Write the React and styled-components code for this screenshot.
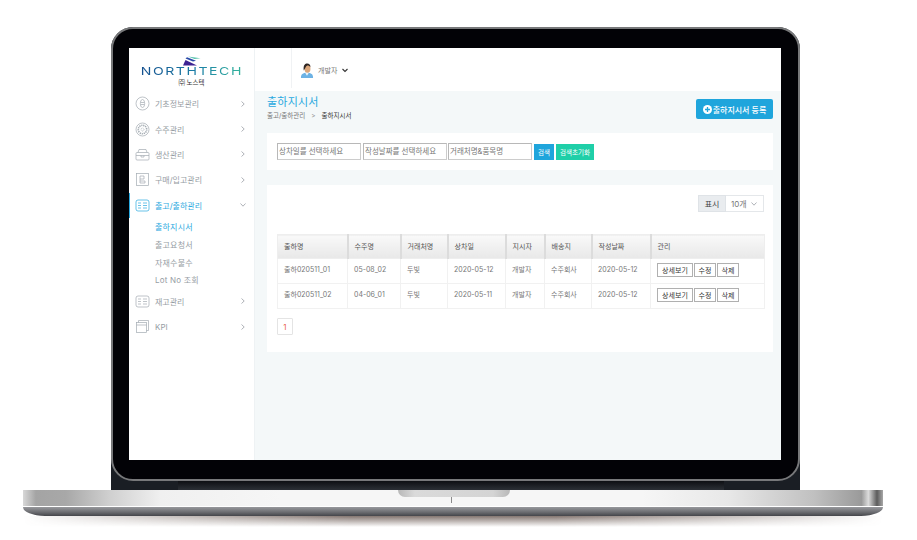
import styled, { createGlobalStyle } from "styled-components"

const GlobalStyle = createGlobalStyle`
    html, body {
        margin: 0;
        padding: 0;
        background: #fff;
        overflow: hidden;
    }
    * {
        box-sizing: border-box;
    }
    body {
        font-family: Inter, "Noto Sans CJK KR", "Noto Sans", sans-serif;
    }
`

const menuTop = [
    { name: "기초정보관리", icon: "coin" },
    { name: "수주관리", icon: "dots" },
    { name: "생산관리", icon: "case" },
    { name: "구매/입고관리", icon: "receipt" },
]
const subMenu = ["출하지시서", "출고요청서", "자재수불수", "Lot No 조회"]
const menuBottom = [
    { name: "재고관리", icon: "list" },
    { name: "KPI", icon: "window" },
]
const columns = [70, 53, 47, 58, 39, 47, 59, 114]
const headers = ["출하명", "수주명", "거래처명", "상차일", "지시자", "배송지", "작성날짜", "관리"]
const rows = [
    ["출하020511_01", "05-08_02", "두빛", "2020-05-12", "개발자", "수주회사", "2020-05-12"],
    ["출하020511_02", "04-06_01", "두빛", "2020-05-11", "개발자", "수주회사", "2020-05-12"],
]

function MenuIcon({ type, color }) {
    return (
        <svg width="15" height="15" viewBox="0 0 15 15" fill="none" stroke={color} strokeWidth="0.7">
            {type === "coin" && <>
                <circle cx="7.500" cy="7.500" r="6.500" />
                <ellipse cx="7.500" cy="7.500" rx="2.200" ry="4" />
                <path d="M6 6.500h3M6 8.500h3" />
            </>}
            {type === "dots" && <>
                <circle cx="7.500" cy="7.500" r="6.500" />
                <circle cx="7.500" cy="7.500" r="4.200" strokeDasharray="1.200 0.800" strokeWidth="1.600" />
                <circle cx="7.500" cy="7.500" r="1.500" strokeDasharray="1 0.600" />
            </>}
            {type === "case" && <>
                <rect x="1" y="5.500" width="13" height="7.500" rx="1" />
                <path d="M1 8.500h13M3 5.500L4 2.500h7l1 3M6 8.500v1.500h3V8.500" />
            </>}
            {type === "receipt" && <>
                <rect x="1.500" y="1.500" width="12" height="12" />
                <path d="M5 11V4h4v3H5M5 9h5v2H5" />
            </>}
            {type === "list" && <>
                <rect x="1" y="2" width="13" height="11" rx="2" />
                <path d="M3 5h3M3 7.500h3M3 10h3M8 5h4M8 7.500h4M8 10h4" />
            </>}
            {type === "window" && <>
                <rect x="1.500" y="3.500" width="10" height="10" />
                <path d="M1.500 6h10M3.500 3.500V1.500h10v10h-2" />
            </>}
        </svg>
    )
}

function Chevron({ down }) {
    return (
        <svg width="6" height="6" viewBox="0 0 6 6" fill="none" stroke="#9aa0a6" strokeWidth="0.8">
            <path d={down ? "M0.500 1.500L3 4.200 5.500 1.500" : "M1.500 0.500L4.200 3 1.500 5.500"} />
        </svg>
    )
}

function Menu({ item }) {
    return (
        <MenuItem>
            <MenuIcon type={item.icon} color="#a3abb2" />
            <MenuName>{item.name}</MenuName>
            <Chevron />
        </MenuItem>
    )
}

export default function App() {
    return (
        <Page>
            <GlobalStyle />
            <LidBack>
                <Bezel>
                    <Screen>
                        <Sidebar>
                            <Logo>
                                <svg width="18" height="10" viewBox="0 0 18 10">
                                    <path d="M0 9.500L2.500 4l11.500 5.500z" fill="#3d2392" />
                                    <path d="M2.500 2.500l1.500 -1.200 9 3.500 -3 .7z" fill="#2a4aa8" />
                                    <path d="M5 .5l12.500 1.800 -6 .8z" fill="#58c3ae" />
                                </svg>
                                <LogoWord>NORTHTECH</LogoWord>
                                <LogoSub>㈜ 노스텍</LogoSub>
                            </Logo>
                            {menuTop.map(item => <Menu key={item.name} item={item} />)}
                            <MenuItem $active>
                                <MenuIcon type="list" color="#2aa9e0" />
                                <MenuName>출고/출하관리</MenuName>
                                <Chevron down />
                            </MenuItem>
                            {subMenu.map((name, i) => <SubItem key={name} $active={i === 0}>{name}</SubItem>)}
                            {menuBottom.map(item => <Menu key={item.name} item={item} />)}
                        </Sidebar>
                        <Right>
                            <Header>
                                <HeaderUser>
                                    <svg width="14" height="15" viewBox="0 0 15 16">
                                        <path d="M1 16c0-4 2-5.500 6.500-5.500S14 12 14 16z" fill="#6db2e4" />
                                        <path d="M5.500 10.500l2 3 2-3z" fill="#eef4f8" />
                                        <ellipse cx="8" cy="6" rx="3.200" ry="4.300" fill="#dba67a" />
                                        <path d="M4 8C3.300 2 5.500 .5 7.800 .5c2 0 3.600 1.300 3.300 4-.7-1.300-1.500-1.800-3.300-1.800C6 3 5.800 6 4 8z" fill="#2e2522" />
                                    </svg>
                                    <UserName>개발자</UserName>
                                    <svg width="6" height="5" viewBox="0 0 6 5" fill="none" stroke="#333" strokeWidth="1.100">
                                        <path d="M0.500 1L3 3.500 5.500 1" />
                                    </svg>
                                </HeaderUser>
                            </Header>
                            <Main>
                                <TitleRow>
                                    <div>
                                        <Title>출하지시서</Title>
                                        <Breadcrumb>
                                            출고/출하관리<Sep>&gt;</Sep><b>출하지시서</b>
                                        </Breadcrumb>
                                    </div>
                                    <AddButton>
                                        <svg width="9" height="9" viewBox="0 0 9 9">
                                            <circle cx="4.500" cy="4.500" r="4.500" fill="#fff" />
                                            <path d="M4.500 2v5M2 4.500h5" stroke="#1fa5dc" strokeWidth="1.300" />
                                        </svg>
                                        출하지시서 등록
                                    </AddButton>
                                </TitleRow>
                                <SearchCard>
                                    <SearchInput placeholder="상차일를 선택하세요" />
                                    <SearchInput placeholder="작성날짜를 선택하세요" />
                                    <SearchInput placeholder="거래처명&품목명" />
                                    <SearchButton>검색</SearchButton>
                                    <ResetButton>검색초기화</ResetButton>
                                </SearchCard>
                                <TableCard>
                                    <ShowRow>
                                        <ShowLabel>표시</ShowLabel>
                                        <ShowValue>10개<Chevron down /></ShowValue>
                                    </ShowRow>
                                    <Table>
                                        <colgroup>
                                            {columns.map((w, i) => <col key={i} width={w} />)}
                                        </colgroup>
                                        <thead>
                                            <tr>{headers.map(h => <Th key={h}>{h}</Th>)}</tr>
                                        </thead>
                                        <tbody>
                                            {rows.map(row => (
                                                <tr key={row[0]}>
                                                    {row.map((cell, i) => <Td key={i}><CellText>{cell}</CellText></Td>)}
                                                    <Td>
                                                        <Actions>
                                                            <ActionButton $w={36}>상세보기</ActionButton>
                                                            <ActionButton $w={22}>수정</ActionButton>
                                                            <ActionButton $w={22}>삭제</ActionButton>
                                                        </Actions>
                                                    </Td>
                                                </tr>
                                            ))}
                                        </tbody>
                                    </Table>
                                    <PageBox>1</PageBox>
                                </TableCard>
                            </Main>
                        </Right>
                    </Screen>
                </Bezel>
                <HingeBand />
            </LidBack>
            <Base>
                <BaseTop />
                <BaseLip />
                <Notch />
                <Tick />
            </Base>
            <BaseShadow />
        </Page>
    )
}

const Page = styled.div`
    width: 917px;
    height: 540px;
    padding-top: 27px;
    display: flex;
    flex-direction: column;
    align-items: center;
    background: #fff;
    overflow: hidden;
`
const LidBack = styled.div`
    width: 689px;
    margin-left: -6px;
    background: #1a1e24;
    border-radius: 22px 22px 0 0;
    display: flex;
    flex-direction: column;
`
const Bezel = styled.div`
    height: 454px;
    padding: 19px 17px 19px 16px;
    background: #020206;
    border: 2px solid #77787a;
    border-radius: 22px;
`
const HingeBand = styled.div`
    height: 9px;
    margin: 0 76px 0 67px;
    background: linear-gradient(#0d0f13, #2c3036);
`
const Screen = styled.div`
    width: 652px;
    height: 412px;
    display: flex;
    background: #fff;
    overflow: hidden;
`
const Sidebar = styled.div`
    width: 126px;
    flex-shrink: 0;
    background: #fff;
    border-right: 1px solid #eef2f4;
`
const Logo = styled.div`
    height: 43px;
    padding-top: 8px;
    display: flex;
    flex-direction: column;
    align-items: center;
    line-height: 1;
`
const LogoWord = styled.div`
    font-family: Inter, sans-serif;
    font-size: 11px;
    line-height: 10px;
    font-weight: 400;
    letter-spacing: 1.2px;
    margin-right: -1px;
    transform: scaleX(1.28);
    background: linear-gradient(to right, #14508f, #1b7fa6 55%, #35b59c);
    -webkit-background-clip: text;
    background-clip: text;
    color: transparent;
    white-space: nowrap;
`
const LogoSub = styled.div`
    font-family: "Noto Sans CJK KR", sans-serif;
    font-size: 6.500px;
    line-height: 7px;
    color: #333;
    margin-top: 3px;
`
const MenuItem = styled.div`
    height: 25.4px;
    display: flex;
    align-items: center;
    padding: 0 8px 0 6px;
    gap: 5px;
    font-size: 8px;
    color: ${props => props.$active ? "#2aa9e0" : "#969da4"};
    box-shadow: ${props => props.$active ? "inset 1px 0 0 #2aa9e0" : "none"};
`
const MenuName = styled.span`
    flex: 1;
`
const SubItem = styled.div`
    height: 17.7px;
    padding-left: 26px;
    display: flex;
    align-items: center;
    font-size: 8px;
    letter-spacing: 0.2px;
    color: ${props => props.$active ? "#2aa9e0" : "#969da4"};
`
const Right = styled.div`
    flex: 1;
    min-width: 0;
    display: flex;
    flex-direction: column;
`
const Header = styled.div`
    height: 43px;
    padding-left: 36px;
    background: #fff;
`
const HeaderUser = styled.div`
    height: 40px;
    padding: 4px 0 0 8px;
    display: flex;
    align-items: center;
    gap: 4px;
    font-size: 7px;
    color: #777;
    border-left: 1px solid #f0f2f4;
`
const UserName = styled.span`
    margin-right: 1px;
`
const Main = styled.div`
    flex: 1;
    padding: 4px 8px 0 12px;
    background: #f4f8f9;
`
const TitleRow = styled.div`
    height: 38px;
    display: flex;
    justify-content: space-between;
    align-items: flex-start;
`
const Title = styled.div`
    font-size: 11px;
    line-height: 14px;
    letter-spacing: 0.2px;
    color: #2aa9e0;
`
const Breadcrumb = styled.div`
    margin-top: 3px;
    font-size: 6.500px;
    line-height: 9px;
    color: #777;
    b {
        font-weight: 400;
        color: #333;
    }
`
const Sep = styled.span`
    margin: 0 6px;
    color: #999;
`
const AddButton = styled.button`
    width: 77px;
    height: 20px;
    margin-top: 4px;
    padding: 0;
    display: flex;
    align-items: center;
    justify-content: center;
    gap: 1px;
    border: none;
    border-radius: 2px;
    background: #1fa5dc;
    color: #fff;
    font-family: inherit;
    font-size: 8px;
    font-weight: 500;
`
const SearchCard = styled.div`
    height: 37px;
    margin-bottom: 15px;
    padding: 10px;
    display: flex;
    align-items: flex-start;
    gap: 2px;
    background: #fff;
`
const SearchInput = styled.input`
    width: 84px;
    height: 17px;
    padding: 0 1px;
    border: 1px solid #b8b8b8;
    border-right-color: #ccc;
    border-bottom-color: #ccc;
    outline: none;
    font-family: inherit;
    font-size: 7.500px;
    &::placeholder {
        color: #777;
        opacity: 1;
    }
    &:nth-child(3) {
        margin-left: -1px;
    }
`
const SearchButton = styled.button`
    width: 20px;
    height: 16px;
    margin-top: 1px;
    padding: 0;
    border: none;
    background: #1fa5dc;
    color: #fff;
    font-family: inherit;
    font-size: 6.500px;
`
const ResetButton = styled(SearchButton)`
    width: 38px;
    background: #1fcfa8;
`
const TableCard = styled.div`
    height: 167px;
    padding: 10px 9px 0 10px;
    background: #fff;
`
const ShowRow = styled.div`
    height: 17px;
    margin-bottom: 22px;
    display: flex;
    justify-content: flex-end;
    font-size: 8px;
`
const ShowLabel = styled.div`
    width: 28px;
    display: flex;
    align-items: center;
    justify-content: center;
    background: #e9ecef;
    border: 1px solid #dfe3e7;
    color: #444;
`
const ShowValue = styled.div`
    width: 38px;
    padding-left: 5px;
    display: flex;
    align-items: center;
    gap: 4px;
    border: 1px solid #e4e7ea;
    border-left: none;
    color: #777;
`
const Table = styled.table`
    width: 487px;
    table-layout: fixed;
    border-collapse: collapse;
    font-size: 7px;
`
const Th = styled.th`
    height: 24px;
    padding: 0 0 1px 6px;
    text-align: left;
    font-weight: 400;
    color: #555;
    background: linear-gradient(#f9f9f9, #e8e8e8);
    border: 1px solid #eeeeee;
    border-right: 2px solid #dcdcdc;
    &:last-child {
        border-right: 1px solid #eeeeee;
    }
`
const Td = styled.td`
    height: 25px;
    padding: 0 0 2px 6px;
    color: #777;
    border: 1px solid #f1f1f1;
    white-space: nowrap;
`
const CellText = styled.span`
    display: block;
    height: 10px;
    line-height: 10px;
`
const Actions = styled.div`
    display: flex;
    gap: 1px;
`
const ActionButton = styled.button`
    width: ${props => props.$w}px;
    height: 14px;
    padding: 0;
    background: #fff;
    border: 1px solid #b0b0b0;
    color: #333;
    font-family: inherit;
    font-size: 7px;
`
const PageBox = styled.div`
    width: 16px;
    height: 17px;
    margin-top: 9px;
    display: flex;
    align-items: center;
    justify-content: center;
    border: 1px solid #e4e4e4;
    border-radius: 1px;
    font-size: 8px;
    color: #e8604c;
`
const Base = styled.div`
    position: relative;
    width: 860px;
    height: 26px;
    margin-left: -11px;
    flex-shrink: 0;
    display: flex;
    flex-direction: column;
`
const BaseTop = styled.div`
    height: 16px;
    background: linear-gradient(to right,
        #d8d8d8 0, #a4a4a4 1.500%, #a8a8a8 5%, #cfcfcf 10%, #f0f0f0 16%, #f6f6f6 30%,
        #f6f6f6 72%, #e8e8e8 82%, #c0c0c0 92%, #9a9a9a 97.500%, #dcdcdc 98.300%, #5c5c5c 99.300%, #a8a8a8 100%);
`
const BaseLip = styled.div`
    height: 10px;
    background: linear-gradient(#ffffff 0, #ffffff 10%, #96979b 12%, #6d6e72 60%, #44454a 100%);
    border-radius: 0 0 22px 22px / 0 0 9px 9px;
`
const Notch = styled.div`
    position: absolute;
    top: 0;
    left: 375px;
    width: 112px;
    height: 7px;
    background: linear-gradient(to right, #b8b8b8, #dadada 15%, #d4d4d4 85%, #b8b8b8);
    border-radius: 0 0 9px 9px;
`
const Tick = styled.div`
    position: absolute;
    top: 7px;
    left: 428px;
    width: 1px;
    height: 6px;
    background: #8a8a8a;
`
const BaseShadow = styled.div`
    width: 860px;
    height: 11px;
    margin-left: -11px;
    flex-shrink: 0;
    background: linear-gradient(rgba(80, 60, 52, 0.7), rgba(120, 110, 105, 0));
    -webkit-mask-image: linear-gradient(to right, transparent, #000 38%, #000 62%, transparent);
    mask-image: linear-gradient(to right, transparent, #000 38%, #000 62%, transparent);
`
